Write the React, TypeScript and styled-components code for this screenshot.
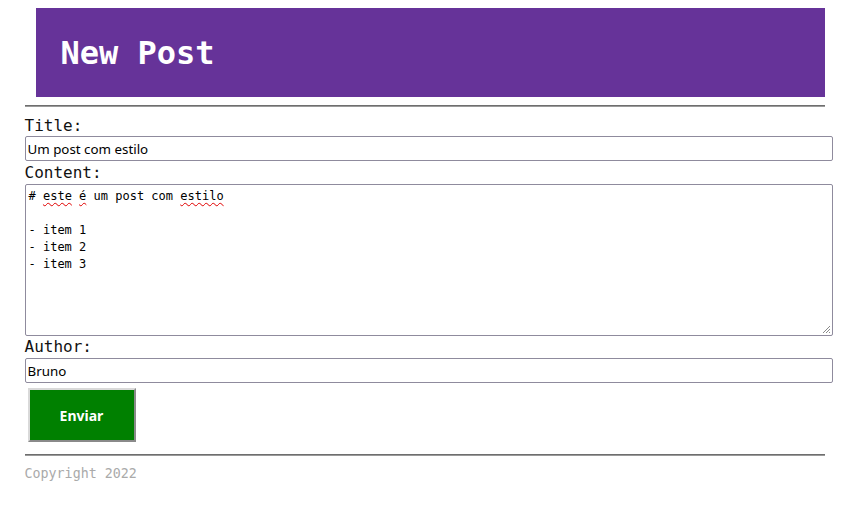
import React from "react";
import styled, { createGlobalStyle } from "styled-components";

const Global = createGlobalStyle`
  html, body { margin: 0; padding: 0; background: #fff; }
  body { margin: 8px; font-family: "DejaVu Sans Mono", monospace; color: #000; }
`;

const Page = styled.div`
  max-width: 800px;
  margin: 0 auto;
`;

const Header = styled.header`
  margin-left: 11px;
  height: 89px;
  background: #663399;
  display: flex;
  align-items: center;
  padding-left: 25px;
`;

const Heading = styled.h1`
  margin: 0;
  color: #fff;
  font-family: "DejaVu Sans Mono", monospace;
  font-weight: bold;
  font-size: 32px;
  line-height: 1;
`;

const Rule = styled.hr`
  margin: 8px 0 7px;
  border: 0;
  border-top: 1px solid #6e6e6e;
  border-bottom: 1px solid #9a9a9a;
  height: 0;
`;

const Form = styled.form`
  display: flex;
  flex-direction: column;
`;

const Label = styled.label`
  display: block;
  box-sizing: border-box;
  height: 22.4px;
  padding-top: 0.6px;
  font-size: 16px;
  line-height: 21px;
  font-family: "DejaVu Sans Mono", monospace;
  color: #111;
`;

const TextInput = styled.input`
  box-sizing: border-box;
  width: 808px;
  height: 25px;
  margin: 0;
  padding: 2px 2px 1px;
  border: 1px solid #8f8b9d;
  border-radius: 2px;
  font-family: "Noto Sans", sans-serif;
  font-size: 13.33px;
  color: #000;
  background: #fff;
  outline: none;
`;

const Editor = styled.div`
  position: relative;
  box-sizing: border-box;
  width: 808px;
  height: 152px;
  padding: 3.5px 3px;
  border: 1px solid #8f8b9d;
  border-radius: 2px;
  font-family: "DejaVu Sans Mono", monospace;
  font-size: 12px;
  line-height: 17px;
  white-space: pre;
  color: #000;
`;

const Line = styled.div`
  height: 17px;
`;

const Misspelled = styled.span`
  text-decoration: underline wavy #e00000;
  text-decoration-thickness: 1px;
  text-underline-offset: 2px;
`;

const Grip = styled.svg`
  position: absolute;
  right: 1px;
  bottom: 1px;
`;

const SubmitRow = styled.div`
  padding: 5px 0 0 3px;
`;

const SubmitButton = styled.button`
  box-sizing: border-box;
  width: 108px;
  height: 54px;
  margin: 0;
  background: #008000;
  color: #fff;
  font-family: "Noto Sans", sans-serif;
  font-weight: bold;
  font-size: 14px;
  border: 2px solid;
  border-color: #d9d9d9 #8a8a8a #8a8a8a #d9d9d9;
  cursor: pointer;
`;

const FooterRule = styled(Rule)`
  margin-top: 12px;
  margin-bottom: 10px;
`;

const Footer = styled.footer`
  font-family: "DejaVu Sans Mono", monospace;
  font-size: 13.33px;
  line-height: 16px;
  color: #aaaaaa;
`;

export default function App() {
  return (
    <>
      <Global />
      <Page>
        <Header>
          <Heading>New Post</Heading>
        </Header>
        <Rule />
        <Form onSubmit={(e) => e.preventDefault()}>
          <Label htmlFor="title">Title:</Label>
          <TextInput id="title" defaultValue="Um post com estilo" />
          <Label htmlFor="content">Content:</Label>
          <Editor id="content" role="textbox" aria-multiline="true">
            <Line>
              # <Misspelled>este</Misspelled> <Misspelled>é</Misspelled> um post com{" "}
              <Misspelled>estilo</Misspelled>
            </Line>
            <Line />
            <Line>- item 1</Line>
            <Line>- item 2</Line>
            <Line>- item 3</Line>
            <Grip width="10" height="10" viewBox="0 0 10 10">
              <path d="M9 2 L2 9 M9 5 L5 9 M9 8 L8 9" stroke="#8a8a8a" strokeWidth="1" fill="none" />
            </Grip>
          </Editor>
          <Label htmlFor="author">Author:</Label>
          <TextInput id="author" defaultValue="Bruno" />
          <SubmitRow>
            <SubmitButton type="submit">Enviar</SubmitButton>
          </SubmitRow>
        </Form>
        <FooterRule />
        <Footer>Copyright 2022</Footer>
      </Page>
    </>
  );
}
